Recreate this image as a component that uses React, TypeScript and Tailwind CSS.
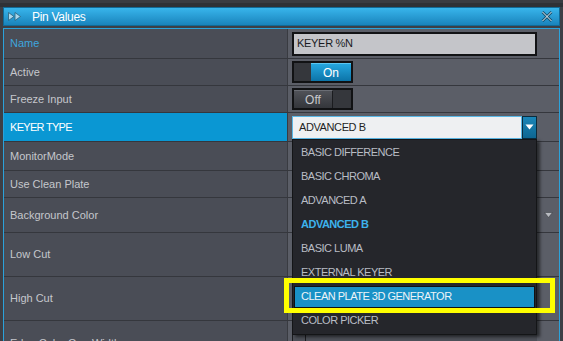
import React from 'react';

// Pin Values panel with the keyer type dropdown opened

function Row({ h, label, labelClass = 'text-[#c5c7cc]', leftClass = 'bg-[#4a4d56]', children }: {
  h: string;
  label: string;
  labelClass?: string;
  leftClass?: string;
  children?: React.ReactNode;
}) {
  return (
    <div className={`flex border-b border-[#35373d] ${h}`}>
      <div className={`w-[284px] shrink-0 flex items-center pl-[6px] border-r border-[#393b41] ${leftClass}`}>
        <span className={labelClass}>{label}</span>
      </div>
      <div className="flex-1 flex items-center pl-[4px] pr-[20px] bg-[#5b5e67]">{children}</div>
    </div>
  );
}

function Toggle({ on }: { on: boolean }) {
  return (
    <div className="flex h-[22px] w-[61px] border-2 border-[#111214] bg-[#303237]">
      {on ? (
        <>
          <div className="w-[17px] bg-[#35373c]" />
          <div className="flex-1 flex items-center justify-center border-t border-[#5cc6f0] bg-gradient-to-b from-[#25a6de] to-[#0c74a8] text-white text-[12px]">
            On
          </div>
        </>
      ) : (
        <>
          <div className="w-[39px] flex items-center justify-center border-t border-[#6a6d74] border-r border-r-[#1b1c1f] bg-gradient-to-b from-[#505258] to-[#34363b] text-[#c8c9cc] text-[12px]">
            Off
          </div>
          <div className="flex-1 bg-[#35373c]" />
        </>
      )}
    </div>
  );
}

const options = [
  'BASIC DIFFERENCE',
  'BASIC CHROMA',
  'ADVANCED A',
  'ADVANCED B',
  'BASIC LUMA',
  'EXTERNAL KEYER',
  'CLEAN PLATE 3D GENERATOR',
  'COLOR PICKER',
];

function Dropdown() {
  return (
    <div className="relative flex h-[23px] w-[245px]">
      <div className="flex-1 flex items-center pl-[6px] bg-[#eef0f2] border border-[#5ab8e6] text-[#1e1f24] tracking-[-0.4px]">
        ADVANCED B
      </div>
      <div className="w-[15px] flex items-center justify-center bg-gradient-to-b from-[#1a86b8] to-[#0d6692] border border-[#0b2c3d]">
        <svg width="9" height="6" viewBox="0 0 9 6">
          <path d="M0.5 0.5 L8.5 0.5 L4.5 5.5 Z" fill="#ffffff" />
        </svg>
      </div>

      <div className="absolute left-0 top-full z-10 w-[245px] h-[196px] pt-[1px] bg-[#25262b] border border-[#141517] shadow-[3px_2px_3px_rgba(0,0,0,0.55)]">
        {options.map((o) => {
          const picked = o === 'ADVANCED B';
          const hover = o === 'CLEAN PLATE 3D GENERATOR';
          return (
            <div key={o} className="h-[24px] flex items-center">
              <div
                className={`flex-1 h-[22px] mx-[1px] flex items-center pl-[6px] tracking-[-0.5px] border ${
                  hover ? 'bg-[#1991c6] border-[#101113] text-[#eef4f8]' : 'border-transparent'
                } ${picked ? 'font-bold text-[#3db2ec]' : hover ? '' : 'text-[#b9bdc5]'}`}
              >
                {o}
              </div>
            </div>
          );
        })}
      </div>
    </div>
  );
}

export default function App() {
  return (
    <div className="relative w-[563px] h-[341px] overflow-hidden bg-[#3d3f45] font-['Liberation_Sans',Arial,sans-serif] text-[11px]">
      <div className="h-[7px] bg-[#2f3136] border-t-[3px] border-[#3a3c42]" />

      <div className="ml-[3px] w-[557px] h-[19px] flex items-center border border-[#126a96] bg-gradient-to-b from-[#38b5ec] to-[#1984bc]">
        <svg width="14" height="9" viewBox="0 0 14 9" className="ml-[4px]">
          <path d="M0.5 0.5 L6 4.5 L0.5 8.5 Z" fill="#a9d7ec" stroke="#2a5f7a" strokeWidth="0.8" />
          <path d="M7 0.5 L12.5 4.5 L7 8.5 Z" fill="#a9d7ec" stroke="#2a5f7a" strokeWidth="0.8" />
        </svg>
        <span className="ml-[10px] text-white text-[12px] tracking-[-0.3px]">Pin Values</span>
        <svg width="12" height="11" viewBox="0 0 12 11" className="ml-auto mr-[6px]">
          <path d="M1.5 1 L10.5 10 M10.5 1 L1.5 10" stroke="#164e6b" strokeWidth="2.6" />
          <path d="M1.5 1 L10.5 10 M10.5 1 L1.5 10" stroke="#eaf6fc" strokeWidth="1" />
        </svg>
      </div>

      <div className="mt-[2px] ml-[3px] w-[557px] border-t border-x border-[#2ba2da]">
        <Row h="h-[30px]" label="Name" labelClass="text-[#3ea6de]">
          <div className="w-[245px] h-[24px] flex items-center pl-[3px] bg-[#c4c5c9] border-2 border-[#121315] text-[#1a1b22] tracking-[-0.3px]">
            KEYER %N
          </div>
        </Row>
        <Row h="h-[27px]" label="Active">
          <Toggle on />
        </Row>
        <Row h="h-[27px]" label="Freeze Input">
          <Toggle on={false} />
        </Row>
        <Row h="h-[29px]" label="KEYER TYPE" labelClass="text-white tracking-[-0.7px]" leftClass="bg-[#0a97d3]">
          <Dropdown />
        </Row>
        <Row h="h-[29px]" label="MonitorMode" />
        <Row h="h-[27px]" label="Use Clean Plate" />
        <Row h="h-[35px]" label="Background Color">
          <svg width="9" height="6" viewBox="0 0 9 6" className="ml-auto -mr-[14px]">
            <path d="M0.5 0.5 L8.5 0.5 L4.5 5.5 Z" fill="#b8bbc1" stroke="#3d3f45" strokeWidth="0.6" />
          </svg>
        </Row>
        <Row h="h-[44px]" label="Low Cut" />
        <Row h="h-[44px]" label="High Cut" />
        <div className="flex h-[44px]">
          <div className="w-[284px] shrink-0 flex items-center pl-[6px] border-r border-[#393b41] bg-[#4a4d56] text-[#c5c7cc]">
            Edge Color Gap Width
          </div>
          <div className="flex-1 pl-[4px] pt-[13px] bg-[#5b5e67]">
            <div className="w-[245px] h-[20px] flex border-l border-t border-[#1c1d20] bg-[#4d5058]">
              <div className="w-[13px] border-r border-[#1c1d20]" />
            </div>
          </div>
        </div>
      </div>

      <div className="absolute left-[284px] top-[278px] w-[271px] h-[35px] border-[5px] border-[#ffff00] z-20" />
    </div>
  );
}
